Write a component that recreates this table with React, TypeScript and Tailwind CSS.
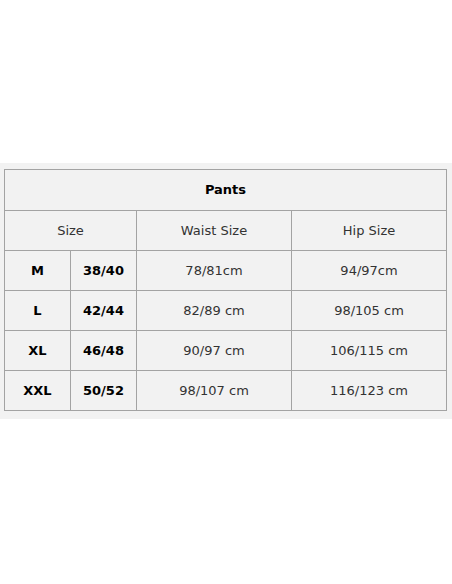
const rows = [
  { s: "M", eu: "38/40", waist: "78/81cm", hip: "94/97cm" },
  { s: "L", eu: "42/44", waist: "82/89 cm", hip: "98/105 cm" },
  { s: "XL", eu: "46/48", waist: "90/97 cm", hip: "106/115 cm" },
  { s: "XXL", eu: "50/52", waist: "98/107 cm", hip: "116/123 cm" },
];

const cell = "border border-[#a3a3a3] text-center p-0";

export default function App() {
  return (
    <main className="h-[584px] overflow-hidden bg-white pt-[163px]" style={{ fontFamily: '"DejaVu Sans", Verdana, sans-serif' }}>
      <div className="bg-[#f2f2f2] pt-[6px] pb-[8px] pl-[4px] pr-[5px]">
        <table className="w-[443px] border-collapse text-[13px] text-[#333]">
          <colgroup>
            <col className="w-[66px]" />
            <col className="w-[66px]" />
            <col className="w-[155px]" />
            <col />
          </colgroup>
          <tbody>
            <tr className="h-[41px]">
              <td colSpan={4} className={`${cell} font-bold text-black`}>Pants</td>
            </tr>
            <tr className="h-[40px]">
              <td colSpan={2} className={cell}>Size</td>
              <td className={cell}>Waist Size</td>
              <td className={cell}>Hip Size</td>
            </tr>
            {rows.map((r) => (
              <tr key={r.s} className="h-[40px]">
                <td className={`${cell} font-bold text-black`}>{r.s}</td>
                <td className={`${cell} font-bold text-black`}>{r.eu}</td>
                <td className={cell}>{r.waist}</td>
                <td className={cell}>{r.hip}</td>
              </tr>
            ))}
          </tbody>
        </table>
      </div>
    </main>
  );
}
